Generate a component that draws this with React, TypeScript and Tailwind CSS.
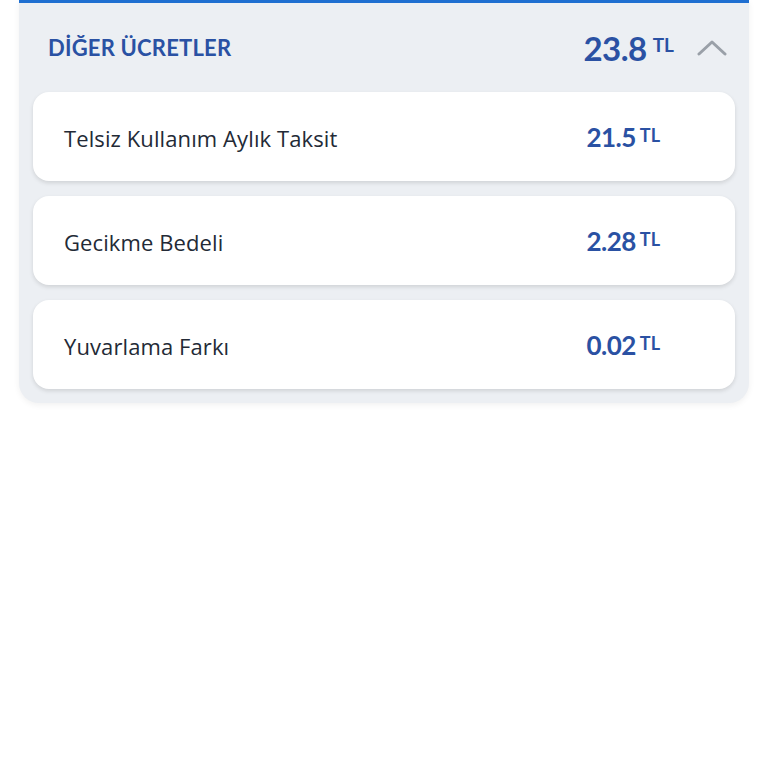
import React from "react";

const items = [
  { label: "Telsiz Kullanım Aylık Taksit", value: "21.5" },
  { label: "Gecikme Bedeli", value: "2.28" },
  { label: "Yuvarlama Farkı", value: "0.02" },
];

export default function App() {
  return (
    <div
      className="w-[768px] h-[768px] bg-white"
      style={{ fontFamily: "Lato, 'Noto Sans', sans-serif" }}
    >
      <div className="ml-[19px] w-[730px] bg-[#eceff3] rounded-b-[20px] border-t-[3px] border-[#1f6fd1] shadow-[0_2px_6px_rgba(0,0,0,0.06)] pb-[14px]">
        <div className="flex items-center h-[89px] pl-[29px] pr-[22px]">
          <div className="flex-1 text-[22px] font-bold text-[#2a51a3] tracking-[0.2px]">
            DİĞER ÜCRETLER
          </div>
          <div className="flex items-start text-[#2a51a3] font-bold">
            <span className="text-[33px] leading-[36px] tracking-[-0.5px]">23.8</span>
            <span className="text-[19px] leading-[20px] ml-[6px] mt-[5px]">TL</span>
          </div>
          <svg
            className="ml-[23px]"
            width="30"
            height="18"
            viewBox="0 0 30 18"
            fill="none"
            stroke="#9aa0a8"
            strokeWidth="3"
            strokeLinecap="round"
            strokeLinejoin="round"
          >
            <path d="M2 15 L15 3 L28 15" />
          </svg>
        </div>
        <div className="flex flex-col gap-[15px] px-[14px]">
          {items.map((it) => (
            <div
              key={it.label}
              className="flex items-center h-[89px] bg-white rounded-[16px] shadow-[0_2px_4px_rgba(0,0,0,0.12)] pl-[31px] pr-[75px]"
            >
              <div
                className="flex-1 text-[22px] text-[#232a36] font-medium tracking-[0.1px] mt-[3px]"
                style={{ fontFamily: "'Open Sans', 'Noto Sans', sans-serif" }}
              >
                {it.label}
              </div>
              <div className="flex items-start text-[#2a51a3] font-bold">
                <span className="text-[26px] leading-[30px] tracking-[-0.5px]">{it.value}</span>
                <span className="text-[18px] leading-[18px] ml-[4px] mt-[4px]">TL</span>
              </div>
            </div>
          ))}
        </div>
      </div>
    </div>
  );
}
